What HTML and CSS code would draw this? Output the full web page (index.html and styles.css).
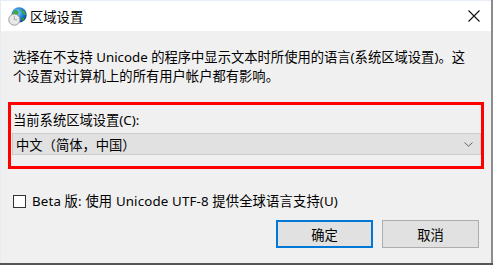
FILE: index.html
```html
<!DOCTYPE html>
<html lang="zh-CN">
<head>
<meta charset="utf-8">
<link rel="stylesheet" href="styles.css">
</head>
<body>
<div class="screen">
  <div class="window">
    <div class="titlebar">
      <svg class="app-icon" width="19" height="19" viewBox="0 0 18 18">
        <defs>
          <radialGradient id="g" cx="0.4" cy="0.35" r="0.7">
            <stop offset="0" stop-color="#7fd0ff"/>
            <stop offset="0.6" stop-color="#1a78d0"/>
            <stop offset="1" stop-color="#0b3f8a"/>
          </radialGradient>
        </defs>
        <circle cx="10.5" cy="7.5" r="7.2" fill="url(#g)"/>
        <path d="M6 3.5 C8 2.5 10 3.5 10 5.5 C10 7 8.5 7 8.5 8.5 C8.5 10 10 10.5 9 12 C7.5 11 5 9.5 4.5 7.5 C4.5 5.5 5 4.5 6 3.5Z" fill="#3aa83a"/>
        <path d="M12.5 2 C14.5 3 16.5 5 17 7.5 C15.5 8 14 7 13.5 5.5 C12.5 4.5 12 3 12.5 2Z" fill="#3aa83a"/>
        <path d="M13 10 C15 10 16 11 15 13 C14 13.5 12.5 12.5 13 10Z" fill="#2f9a32"/>
        <circle cx="6" cy="12" r="5.3" fill="#e8e8e8" stroke="#9a9a9a" stroke-width="0.9"/>
        <path d="M6 8.6 V12 H8.6" fill="none" stroke="#a8a8a8" stroke-width="0.9"/>
      </svg>
      <span class="title">区域设置</span>
      <svg class="close" width="12" height="12" viewBox="0 0 12 12">
        <path d="M0.5 0.5 L11.5 11.5 M11.5 0.5 L0.5 11.5" stroke="#111" stroke-width="1.1" fill="none"/>
      </svg>
    </div>
    <div class="content">
      <p class="desc">选择在不支持 Unicode 的程序中显示文本时所使用的语言(系统区域设置)。这个设置对计算机上的所有用户帐户都有影响。</p>
      <div class="locale-group">
        <div class="label">当前系统区域设置(C):</div>
        <div class="select">
          <span>中文（简体，中国）</span>
          <svg class="chev" width="9" height="5" viewBox="0 0 9 5"><path d="M0.5 0.5 L4.5 4.3 L8.5 0.5" fill="none" stroke="#606060" stroke-width="1"/></svg>
        </div>
      </div>
      <label class="check-row">
        <span class="checkbox"></span>
        <span class="check-text">Beta 版: 使用 Unicode UTF-8 提供全球语言支持(U)</span>
      </label>
      <div class="buttons">
        <button class="btn default">确定</button>
        <button class="btn">取消</button>
      </div>
    </div>
    <div class="highlight"></div>
  </div>
  <div class="edge-right"></div>
</div>
<div class="edge-bottom"></div>
</body>
</html>
```

FILE: styles.css
```css
* { box-sizing: border-box; }
html, body {
  margin: 0;
  padding: 0;
  width: 493px;
  height: 265px;
  overflow: hidden;
  background: #f0f0f0;
  font-family: "Noto Sans", "Noto Sans CJK SC", sans-serif;
  font-size: 13.3px;
  color: #000;
}
.screen {
  display: flex;
  height: 263px;
}
.window {
  position: relative;
  width: 491px;
  height: 263px;
  background: #f0f0f0;
  border-left: 1px solid #e4ecf8;
  border-top: 1px solid #e8eef8;
  display: flex;
  flex-direction: column;
}
.edge-right {
  width: 2px;
  background: #8c8c8c;
}
.edge-bottom {
  height: 2px;
  background: #555;
}
.titlebar {
  height: 30px;
  background: #fff;
  display: flex;
  align-items: center;
  padding-left: 7px;
  padding-right: 11px;
}
.app-icon { flex: none; margin-top: 1px; }
.title {
  margin-left: 3px;
  font-family: "Noto Sans CJK SC", sans-serif;
  font-size: 13.3px;
  flex: 1;
}
.close { flex: none; }
.content {
  padding: 17px 11px 0 11px;
  display: flex;
  flex-direction: column;
}
.desc {
  margin: 0;
  line-height: 19px;
  padding-left: 1px;
  width: 462px;
}
.locale-group {
  margin-top: 25px;
}
.label {
  line-height: 19px;
  padding-left: 1px;
}
.select {
  margin-top: 3px;
  height: 22px;
  width: 469px;
  background: #e1e1e1;
  border: 1px solid #cccccc;
  display: flex;
  align-items: center;
  justify-content: space-between;
  padding: 0 7px 0 3px;
}
.chev { margin-top: 1px; }
.check-row {
  margin-top: 37px;
  display: flex;
  align-items: center;
  gap: 6px;
  line-height: 19px;
  padding-left: 1px;
}
.check-text { letter-spacing: 0.15px; }
.checkbox {
  width: 13px;
  height: 13px;
  border: 1px solid #333;
  background: #fff;
  flex: none;
}
.buttons {
  margin-top: 9px;
  display: flex;
  justify-content: flex-end;
  gap: 9px;
  padding-right: 1px;
}
.btn {
  width: 97px;
  height: 28px;
  background: #e1e1e1;
  border: 1px solid #adadad;
  font-family: "Noto Sans CJK SC", sans-serif;
  font-size: 13.3px;
  color: #000;
  padding: 0;
}
.btn.default {
  border: 1px solid #0078d7;
  box-shadow: inset 0 0 0 1px #0078d7;
}
.highlight {
  position: absolute;
  left: 7px;
  top: 101px;
  width: 476px;
  height: 67px;
  border: 3px solid #ff0000;
  pointer-events: none;
}
```
